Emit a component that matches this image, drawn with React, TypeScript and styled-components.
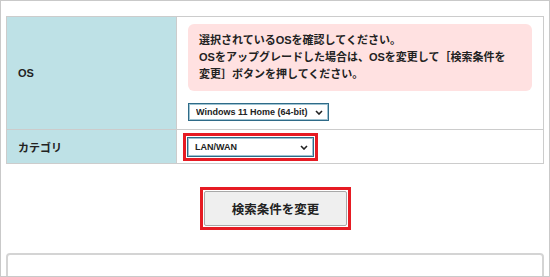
import React from 'react'
import styled, { createGlobalStyle } from 'styled-components'

const GlobalStyle = createGlobalStyle`
  html, body {
    margin: 0;
    padding: 0;
    background: #ffffff;
  }
  body {
    font-family: "Liberation Sans", "Noto Sans CJK JP", sans-serif;
    color: #222222;
  }
`

const Frame = styled.div`
  box-sizing: border-box;
  width: 550px;
  height: 277px;
  border: 1px solid #c9c9c9;
  padding: 15px 5px 0 5px;
  overflow: hidden;
`

const Table = styled.div`
  display: grid;
  grid-template-columns: 170px 1fr;
  border-top: 1px solid #cccccc;
  border-left: 1px solid #cccccc;
`

const LabelCell = styled.div`
  display: flex;
  align-items: center;
  padding-left: 11px;
  background: #bee1e6;
  border-right: 1px solid #cccccc;
  border-bottom: 1px solid #cccccc;
  font-size: 11px;
  font-weight: bold;
`

const ValueCell = styled.div<{ $pad: string }>`
  padding: ${({ $pad }) => $pad};
  border-right: 1px solid #cccccc;
  border-bottom: 1px solid #cccccc;
  display: flex;
  flex-direction: column;
  align-items: flex-start;
`

const Notice = styled.div`
  box-sizing: border-box;
  align-self: stretch;
  background: #ffe1e1;
  border-radius: 6px;
  padding: 8px 24px 8px 11px;
  font-size: 11px;
  font-weight: bold;
  line-height: 17px;
  margin-bottom: 12px;
`

const SelectWrap = styled.div`
  position: relative;
  display: inline-flex;
`

const Select = styled.select<{ $w: number; $h: number }>`
  appearance: none;
  -webkit-appearance: none;
  box-sizing: border-box;
  width: ${({ $w }) => $w}px;
  height: ${({ $h }) => $h}px;
  margin: 0;
  padding: 0 14px 0 7px;
  border: 1px solid #2f6b88;
  box-shadow: inset 0 0 0 1px #9ec3d2;
  border-radius: 0;
  background: #ffffff;
  font-family: "Liberation Sans", "Noto Sans CJK JP", sans-serif;
  font-size: 9px;
  font-weight: bold;
  color: #222222;
`

const Chevron = styled.svg`
  position: absolute;
  right: 6px;
  top: 50%;
  margin-top: -2px;
  pointer-events: none;
`

const Highlight = styled.div`
  display: inline-flex;
  padding: 1px;
  border: 3px solid #e61b23;
`

const Actions = styled.div`
  display: flex;
  justify-content: center;
  padding: 23px 0 0 1px;
`

const Button = styled.button`
  box-sizing: border-box;
  width: 143px;
  height: 35px;
  margin: 0;
  border: 1px solid #a8a8a8;
  border-radius: 2px;
  background: #efefef;
  font-family: "Liberation Sans", "Noto Sans CJK JP", sans-serif;
  font-size: 12.5px;
  font-weight: bold;
  color: #222222;
`

const NextPanel = styled.div`
  margin-top: 23px;
  height: 40px;
  border: 2px solid #d4d4d4;
  border-radius: 4px;
`

const Dropdown = ({ value, w, h }: { value: string; w: number; h: number }) => (
  <SelectWrap>
    <Select $w={w} $h={h} defaultValue={value}>
      <option>{value}</option>
    </Select>
    <Chevron width="8" height="5" viewBox="0 0 8 5">
      <path d="M1 1 L4 4 L7 1" fill="none" stroke="#222" strokeWidth="1.6" />
    </Chevron>
  </SelectWrap>
)

const App = () => (
  <>
    <GlobalStyle />
    <Frame>
      <Table>
        <LabelCell>OS</LabelCell>
        <ValueCell $pad="7px 11px 8px 11px">
          <Notice>
            選択されているOSを確認してください。
            <br />
            OSをアップグレードした場合は、OSを変更して［検索条件を変更］ボタンを押してください。
          </Notice>
          <Dropdown value="Windows 11 Home (64-bit)" w={141} h={18} />
        </ValueCell>
        <LabelCell>カテゴリ</LabelCell>
        <ValueCell $pad="3px 6px 2px 6px">
          <Highlight>
            <Dropdown value="LAN/WAN" w={127} h={20} />
          </Highlight>
        </ValueCell>
      </Table>
      <Actions>
        <Highlight>
          <Button>検索条件を変更</Button>
        </Highlight>
      </Actions>
      <NextPanel />
    </Frame>
  </>
)

export default App
